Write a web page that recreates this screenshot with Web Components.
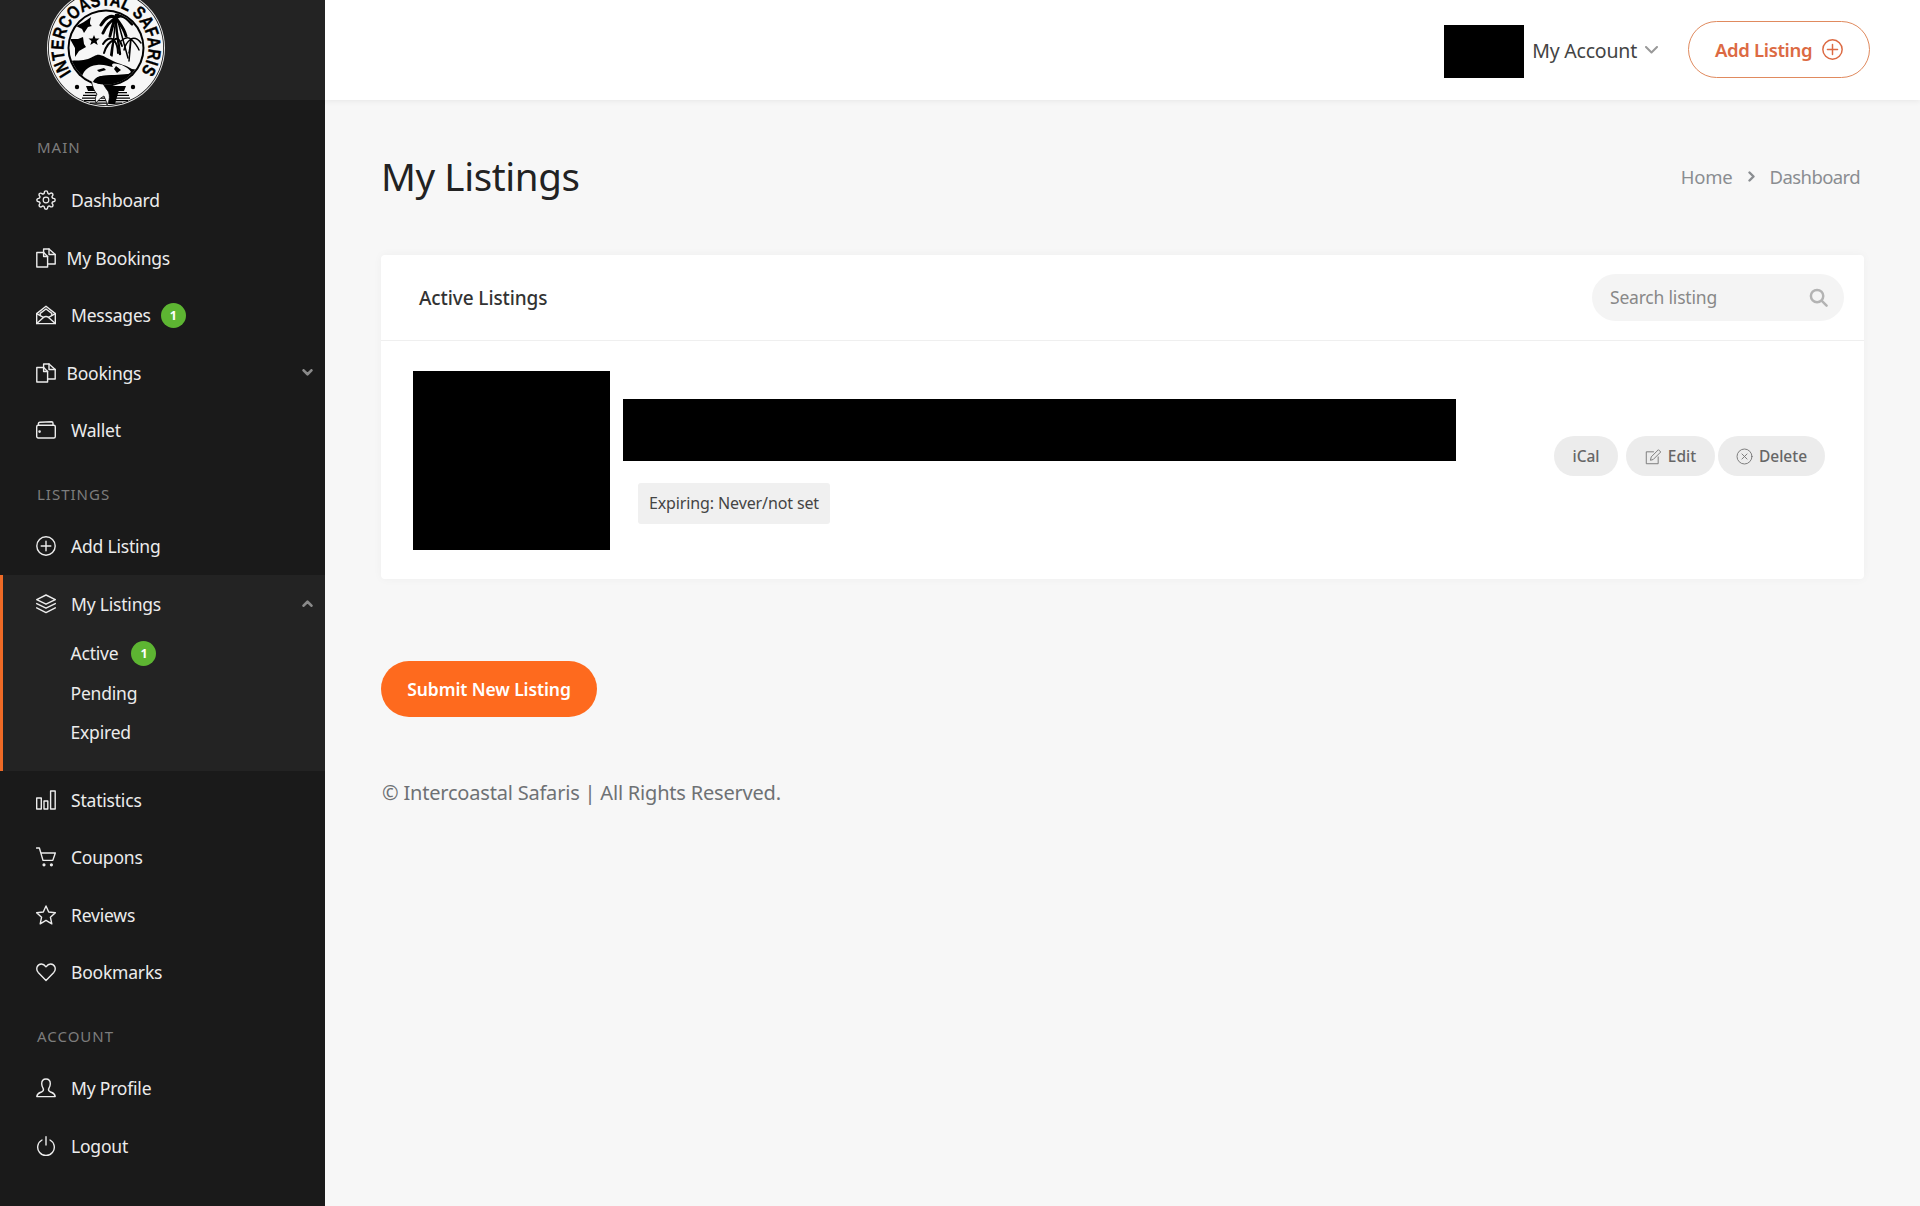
<!DOCTYPE html>
<html lang="en"><head><meta charset="utf-8"><title>My Listings</title>
<style>
html,body{margin:0;height:100%;background:#f7f7f7;overflow:hidden}
body{font-family:"Noto Sans","Open Sans",sans-serif;display:flex;height:1206px}
</style></head><body>
<app-sidebar>
  <nav-label>Main</nav-label>
  <nav-item icon="gear">Dashboard</nav-item>
  <nav-item icon="docs" tight>My Bookings</nav-item>
  <nav-item icon="mail" badge="1">Messages</nav-item>
  <nav-item icon="docs" tight chevron="down">Bookings</nav-item>
  <nav-item icon="wallet">Wallet</nav-item>
  <nav-label>Listings</nav-label>
  <nav-item icon="plus">Add Listing</nav-item>
  <nav-group>
    <nav-item icon="layers" chevron="up">My Listings</nav-item>
    <nav-sub badge="1">Active</nav-sub>
    <nav-sub>Pending</nav-sub>
    <nav-sub>Expired</nav-sub>
  </nav-group>
  <nav-item icon="bars">Statistics</nav-item>
  <nav-item icon="cart">Coupons</nav-item>
  <nav-item icon="star">Reviews</nav-item>
  <nav-item icon="heart">Bookmarks</nav-item>
  <nav-label>Account</nav-label>
  <nav-item icon="user">My Profile</nav-item>
  <nav-item icon="power">Logout</nav-item>
</app-sidebar>
<main-area>
  <top-bar></top-bar>
  <page-content>
    <title-row></title-row>
    <listings-card></listings-card>
    <submit-button>Submit New Listing</submit-button>
    <page-footer>© Intercoastal Safaris | All Rights Reserved.</page-footer>
  </page-content>
</main-area>
<script>
const ICONS={
gear:'<svg viewBox="0 0 24 24"><circle cx="12" cy="12" r="3.4"/><path d="M19.4 15a1.65 1.65 0 0 0 .33 1.82l.06.06a2 2 0 0 1 0 2.83 2 2 0 0 1-2.83 0l-.06-.06a1.65 1.65 0 0 0-1.82-.33 1.65 1.65 0 0 0-1 1.51V21a2 2 0 0 1-2 2 2 2 0 0 1-2-2v-.09A1.65 1.65 0 0 0 9 19.4a1.65 1.65 0 0 0-1.82.33l-.06.06a2 2 0 0 1-2.83 0 2 2 0 0 1 0-2.83l.06-.06a1.65 1.65 0 0 0 .33-1.82 1.65 1.65 0 0 0-1.51-1H3a2 2 0 0 1-2-2 2 2 0 0 1 2-2h.09A1.65 1.65 0 0 0 4.6 9a1.65 1.65 0 0 0-.33-1.82l-.06-.06a2 2 0 0 1 0-2.83 2 2 0 0 1 2.83 0l.06.06a1.65 1.65 0 0 0 1.82.33H9a1.65 1.65 0 0 0 1-1.51V3a2 2 0 0 1 2-2 2 2 0 0 1 2 2v.09a1.65 1.65 0 0 0 1 1.51 1.65 1.65 0 0 0 1.82-.33l.06-.06a2 2 0 0 1 2.83 0 2 2 0 0 1 0 2.83l-.06.06a1.65 1.65 0 0 0-.33 1.82V9a1.65 1.65 0 0 0 1.51 1H21a2 2 0 0 1 2 2 2 2 0 0 1-2 2h-.09a1.65 1.65 0 0 0-1.51 1z" stroke-width="1.7"/></svg>',
docs:'<svg viewBox="0 0 20 20"><path d="M.8 4.5H7.6L11.6 8.5V19H.8Z"/><path d="M7.6 4.5V8.5H11.6"/><path d="M7.6 4.5V1H13L19.2 6.5V16H11.6"/><path d="M13 1V6.5H19.2"/></svg>',
mail:'<svg viewBox="0 0 20 20"><path d="M.7 8.6 10 1.2 19.3 8.6V18.6H.7Z"/><path d="M.7 18.6 7.4 12.4Q10 10.6 12.6 12.4L19.3 18.6"/><path d="M.7 8.6 7.4 12.4M19.3 8.6 12.6 12.4"/><path d="M4.2 9.8V8.4L10 4 15.8 8.4V9.8"/></svg>',
wallet:'<svg viewBox="0 0 20 20"><rect x=".7" y="5.2" width="18.6" height="12.8" rx="1.5"/><path d="M2.4 5V3.4Q2.6 2.3 3.8 2.2L15.5 1.8Q17 1.9 17 3.2V5.2"/><circle cx="3.6" cy="11.6" r=".6"/></svg>',
plus:'<svg viewBox="0 0 20 20"><circle cx="10" cy="10" r="9.2"/><path d="M10 5.2V14.8M5.2 10H14.8"/></svg>',
layers:'<svg viewBox="0 0 20 20"><path d="M10 1 19.3 5.6 10 10.2.7 5.6Z"/><path d="M.7 9.6 10 14.2 19.3 9.6"/><path d="M.7 13.8 10 18.6 19.3 13.8"/></svg>',
bars:'<svg viewBox="0 0 20 20"><rect x=".7" y="8" width="4.6" height="11"/><rect x="8" y="11" width="3.8" height="8"/><rect x="14.6" y="1" width="4.6" height="18"/></svg>',
cart:'<svg viewBox="0 0 20 20"><path d="M.6 1H3.4L7 13.4H16.8L19.3 6H5.2"/><circle cx="8" cy="17.8" r=".9" fill="currentColor"/><circle cx="15.4" cy="17.8" r=".9" fill="currentColor"/></svg>',
star:'<svg viewBox="0 0 20 20"><path d="M10 1 12.7 7 19.4 7.7 14.4 12.2 15.8 18.8 10 15.4 4.2 18.8 5.6 12.2.6 7.7 7.3 7Z"/></svg>',
heart:'<svg viewBox="0 0 20 20"><path d="M10 18.6 2.2 10.4C-.5 7.4.9 2 5.4 2 7.7 2 9 3.4 10 4.8 11 3.4 12.3 2 14.6 2 19.1 2 20.5 7.4 17.8 10.4Z"/></svg>',
user:'<svg viewBox="0 0 20 20"><path d="M10 1C7.3 1 5.7 3 5.7 5.8 5.7 8.3 6.8 10 7.4 11 7.7 12.2 7 13.3 5.5 14 3.5 14.8 1.2 15.2.8 18.6H19.2C18.8 15.2 16.5 14.8 14.5 14 13 13.3 12.3 12.2 12.6 11 13.2 10 14.3 8.3 14.3 5.8 14.3 3 12.7 1 10 1Z"/></svg>',
power:'<svg viewBox="0 0 20 20"><path d="M6 4A8.3 8.3 0 1 0 14 4"/><path d="M10 .8V9"/></svg>',
edit:'<svg viewBox="0 0 20 20"><path d="M15.5 10.5V18.5H1.5V4.5H10"/><path d="M6.5 14 7.3 10.5 15.8 2 18.5 4.7 10 13.2Z"/></svg>',
close:'<svg viewBox="0 0 20 20"><circle cx="10" cy="10" r="8.8"/><path d="M7 7 13 13M13 7 7 13"/></svg>'};
const svgBase='svg{display:block;width:100%;height:100%;fill:none;stroke:currentColor;stroke-width:1.4;stroke-linejoin:round;stroke-linecap:round}';
function def(name,css,html){
  customElements.define(name,class extends HTMLElement{
    connectedCallback(){
      if(this.shadowRoot)return;
      this.attachShadow({mode:'open'});
      this.shadowRoot.innerHTML='<style>'+css+'</style>'+(typeof html==='function'?html(this):html);
    }
  });
}
const badge=b=>b?'<span class="badge">'+b+'</span>':'';
const badgeCss='.badge{display:flex;align-items:center;justify-content:center;width:25px;height:25px;border-radius:50%;background:#5db532;color:#fff;font-size:12.5px;font-weight:700;margin-left:10px}';

def('app-sidebar',`:host{display:flex;flex-direction:column;width:325px;height:1206px;flex:none;background:#1a1a1a;position:relative;font-family:"Noto Sans","Open Sans",sans-serif}
.top{height:100px;background:#232323;flex:none;position:relative;z-index:2}
.logo{position:absolute;left:46px;top:-12px;width:120px;height:120px}
.logo text{font-family:"Liberation Sans",sans-serif;font-weight:700;font-size:18px;fill:#000;stroke:#000;stroke-width:.35}`,
`<div class="top"><svg class="logo" viewBox="-60 -60 120 120" aria-label="Intercoastal Safaris logo">
<defs><path id="arc" d="M-34.500 24.500A42.300 42.300 0 1 1 34.500 24.500"/><clipPath id="inner"><circle r="36.500"/></clipPath></defs>
<circle r="59" fill="#e4e4e4"/><circle r="58" fill="#111"/><circle r="57.200" fill="#f6f6f6"/>
<text><textPath href="#arc" textLength="184" lengthAdjust="spacingAndGlyphs">INTERCOASTAL SAFARIS</textPath></text>
<circle cx="-29" cy="39" r="2.200" fill="#000"/><circle cx="27" cy="39" r="2.200" fill="#000"/>
<g fill="#000"><path d="M-20 38H20L18 43H-18Z"/><path d="M-21 44H21V45.200H-21ZM-23 46.800H23V48H-23ZM-24 49.400H24V50.800H-24ZM-22 52H22V53.300H-22ZM-16 54.500H16V55.800H-16Z"/><path d="M0 42H13L9 56H3Z"/></g>
<circle r="38.500" fill="#000"/><circle r="36.500" fill="#f6f6f6"/>
<path fill="#f6f6f6" stroke="#000" stroke-width=".8" d="M-15 30C-14 38-12 43-9 46-11 49-11 52-10 55-7 51-4 49-2 48-1 51 1 54 1 57 4 52 4 47 2 43-2 38-5 33-4 28Z"/>
<g clip-path="url(#inner)">
<path fill="#000" d="M-37 13C-30 12-24 13-18 11-12 9-10 6-6 7-1 8 2 11 7 13 13 16 20 17 26 21L40 23V40H-37Z"/>
<path fill="#f4f4f4" d="M-24 33C-25 25-19 18-9 17-2 16 3 19 7 19 4 15 9 15 12 16 17 17 23 20 25 24 21 28 14 28 10 27 6 27-6 27-10 30-14 33-13 36-14 40L-23 40Z"/>
<path fill="#000" d="M-9 22-2 20 0 22-7 24ZM10 18 15 22 11 25 8 21Z"/>
<path fill="#000" d="M-5 28 22 26 28 34 8 40H-13C-12 33-10 29-5 28Z"/>
<path fill="#000" d="M-30 -22C-25 -24-20 -27-15 -31-16 -26-17 -24-14 -22L-18 -21-22 -15-24 -19Z"/>
<path fill="#000" d="M-36 -9-28 -9-23 -11-22 -4-20 -1-27 3-31 9-31 0Z"/>
<path fill="#000" d="M-12 -13-10.500 -9.500-6.500 -9.500-9.500 -7-8.300 -3-12 -5.300-15.700 -3-14.500 -7-17.500 -9.500-13.500 -9.500Z"/>
<g stroke="#000" fill="none" stroke-linecap="round"><path stroke-width="2.400" d="M10 -33C9 -22 12 -10 14 6"/><path stroke-width="1.500" d="M10 -33 6 8M11 -30 22 10"/>
<path stroke-width="3" d="M10 -30C5 -34-1 -30-5 -23M10 -30C4 -27 0 -22-3 -15M10 -30C7 -26 6 -20 4 -12M10 -30C15 -35 21 -30 26 -24M10 -30C14 -24 18 -20 20 -12M10 -29C12 -36 15 -38 16 -40"/>
<path stroke-width="2" d="M8 -8C4 -11 0 -9-3 -4M8 -8C3 -6 0 -2-2 5M8 -8C6 -3 6 0 5 7M8 -8C12 -11 14 -8 16 -2M8 -8C11 -4 12 0 12 5"/>
<path stroke-width="1.500" d="M25 -9C21 -12 18 -10 15 -7M25 -9C21 -6 19 -3 18 2M25 -9C24 -4 24 0 23 5M25 -9C29 -11 32 -9 35 -5M25 -9C28 -6 31 -3 33 2M25 -9 23 13"/></g>
</g></svg></div><slot></slot>`);
def('nav-label',`:host{display:block;box-sizing:border-box;height:58.500px;padding:23px 0 0 37px;color:#7d7d7d;font-size:15px;letter-spacing:1px;text-transform:uppercase;line-height:24px}
:host(:first-child){height:71.250px;padding-top:35px}`,'<slot></slot>');
def('nav-item',`:host{display:flex;align-items:center;height:57.500px;padding-left:36px;padding-right:12px;color:#ececec;font-size:17.500px;box-sizing:border-box;letter-spacing:-.2px}
.i{width:20px;height:20px;flex:none;margin-right:15px}${svgBase}
:host([tight]) .i{margin-right:10.500px}
.chev{margin-left:auto;width:11px;height:7px;color:#8a8a8a}.chev svg{stroke-width:3}
${badgeCss}`,
e=>`<span class="i">${ICONS[e.getAttribute('icon')]}</span><slot></slot>${badge(e.getAttribute('badge'))}${e.getAttribute('chevron')?`<span class="chev"><svg viewBox="0 0 12 8"><path d="${e.getAttribute('chevron')==='up'?'M1.500 6.500 6 2 10.500 6.500':'M1.500 1.500 6 6 10.500 1.500'}"/></svg></span>`:''}`);
def('nav-group',`:host{display:block;height:196px;background:#232323;border-left:3px solid #ee6a26;box-sizing:border-box}
::slotted(nav-item){padding-left:33px;height:58px}`,'<slot></slot>');
def('nav-sub',`:host{display:flex;align-items:center;height:39.500px;padding-left:67.500px;padding-top:1px;box-sizing:border-box;color:#ececec;font-size:17.500px;letter-spacing:-.2px}${badgeCss}.badge{margin-left:13px}`,
e=>`<slot></slot>${badge(e.getAttribute('badge'))}`);
def('main-area',`:host{display:flex;flex-direction:column;flex:1;min-width:0}`,'<slot></slot>');
def('top-bar',`:host{display:flex;align-items:center;justify-content:flex-end;height:100px;flex:none;background:#fff;padding-right:50px;box-sizing:border-box;box-shadow:0 1px 6px rgba(0,0,0,.07);font-family:"Noto Sans","Open Sans",sans-serif;position:relative}
.box{width:80px;height:53px;background:#000;margin-top:3px}
.acct{margin-left:8px;font-size:19.500px;color:#444;letter-spacing:-.2px;margin-top:1px}
.chev{width:13px;height:8px;margin-left:8px;color:#999;margin-top:0}${svgBase}
.chev svg{stroke-width:2}
.add{display:flex;align-items:center;box-sizing:border-box;margin-left:30px;width:182px;height:57px;border:1px solid #e08a5e;border-radius:29px;padding-left:26px;color:#dc6a43;font-size:18.500px;font-weight:600;margin-top:-1px;letter-spacing:-.35px}
.add span{width:21px;height:21px;margin-left:10px;flex:none}`,
`<div class="box"></div><span class="acct">My Account</span><span class="chev"><svg viewBox="0 0 13 8"><path d="M1 1 6.500 6.500 12 1"/></svg></span>
<div class="add">Add Listing<span>${ICONS.plus}</span></div>`);
def('page-content',`:host{display:flex;flex-direction:column;align-items:flex-start;padding:0 56px}`,'<slot></slot>');
def('title-row',`:host{display:flex;align-items:center;justify-content:space-between;align-self:stretch;height:155px;padding-bottom:3px;box-sizing:border-box}
h1{margin:0;font-weight:400;font-size:38.500px;color:#222;letter-spacing:-.4px}
.crumbs{display:flex;align-items:center;color:#8a8d91;font-size:18.500px;padding-right:4px;letter-spacing:-.2px}
.dash{letter-spacing:-.6px}
.sep{width:7px;height:11px;margin:0 15px;color:#8a8d91}${svgBase}.sep svg{stroke-width:2.400}`,
`<h1>My Listings</h1><div class="crumbs"><span>Home</span><span class="sep"><svg viewBox="0 0 7 11"><path d="M1.500 1.500 5.500 5.500 1.500 9.500"/></svg></span><span class="dash">Dashboard</span></div>`);
def('listings-card',`:host{display:block;align-self:stretch;height:324px;background:#fff;border-radius:4px;box-shadow:0 0 10px rgba(0,0,0,.04);font-family:"Noto Sans","Open Sans",sans-serif}
.head{display:flex;align-items:center;justify-content:space-between;height:85px;border-bottom:1px solid #efefef;padding:0 20px 0 38px}
h3{margin:0;font-size:19px;font-weight:500;color:#333;letter-spacing:-.1px}
.search{display:flex;align-items:center;justify-content:space-between;width:252px;height:47px;border-radius:24px;background:#f4f4f4;box-sizing:border-box;padding:0 16px 0 18px;color:#888;font-size:17.500px;letter-spacing:-.2px;margin-top:-1px}
.search span{width:19px;height:19px;color:#b3b3b3}${svgBase}.search svg{stroke-width:2.600}
.body{display:flex;padding:30px 39px 0 32px}
.img{width:197px;height:179px;background:#000;flex:none}
.info{margin-left:13px;padding-top:28px;flex:none}
.bar{width:833px;height:62px;background:#000}
.tag{display:block;margin:22px 0 0 15px;height:41px;line-height:41px;width:192px;box-sizing:border-box;text-align:center;background:#f0f0f0;border-radius:3px;color:#444;font-size:16px;letter-spacing:-.12px;white-space:nowrap}
.btns{display:flex;margin-left:auto;margin-top:65px;height:40px}
.btn{display:flex;align-items:center;justify-content:center;height:40px;border-radius:20px;background:#ececec;color:#666;font-size:15.500px;font-weight:500;box-sizing:border-box}
.btn span{width:17px;height:17px;margin-right:6px;color:#777}.btn svg{stroke-width:1.100}
.ical{width:64px;margin-right:8px}.edit{width:89px;margin-right:3px}.del{width:107px}`,
`<div class="head"><h3>Active Listings</h3><div class="search">Search listing<span><svg viewBox="0 0 20 20"><circle cx="8.500" cy="8.500" r="6.500"/><path d="M13.500 13.500 18.500 18.500"/></svg></span></div></div>
<div class="body"><div class="img"></div><div class="info"><div class="bar"></div><div class="tag">Expiring: Never/not set</div></div>
<div class="btns"><div class="btn ical">iCal</div><div class="btn edit"><span>${ICONS.edit}</span>Edit</div><div class="btn del"><span>${ICONS.close}</span>Delete</div></div></div>`);
def('submit-button',`:host{display:flex;align-items:center;justify-content:center;width:216px;height:56px;margin-top:82px;border-radius:28px;background:#fe6a1e;color:#fff;font-size:17.500px;font-weight:600;letter-spacing:-.1px}`,'<slot></slot>');
def('page-footer',`:host{display:block;margin:61px 0 0 1px;color:#6e7174;font-size:20px;line-height:30px;letter-spacing:-.2px}`,'<slot></slot>');
</script>
</body></html>
